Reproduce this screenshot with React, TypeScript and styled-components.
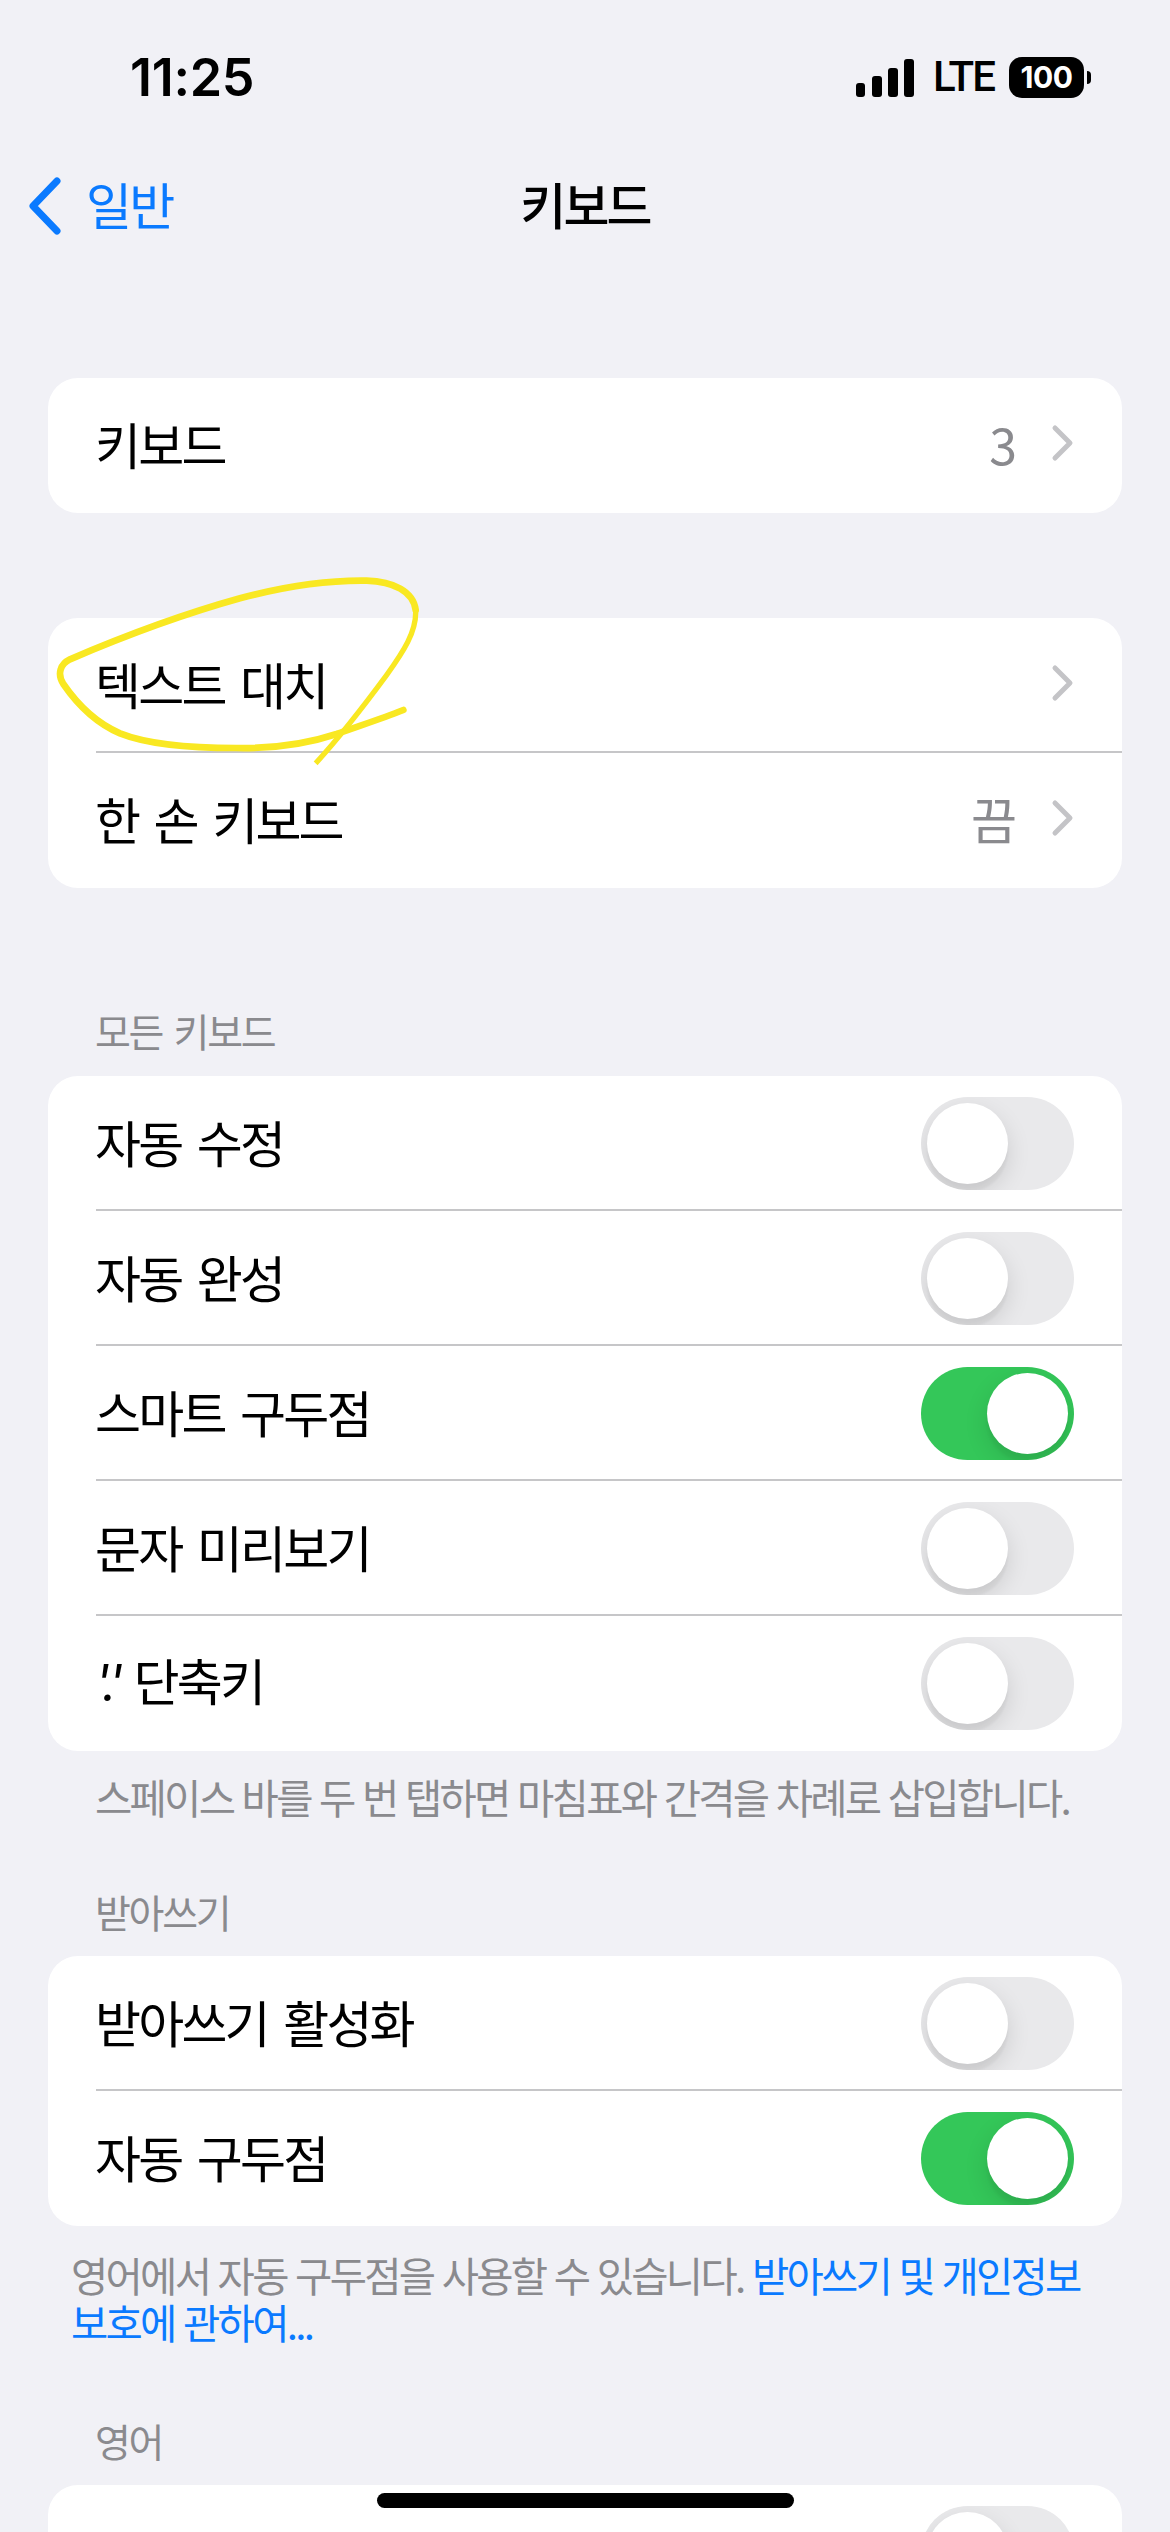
import React from "react";
import styled, { createGlobalStyle } from "styled-components";

const FONT = `"Noto Sans CJK KR", "Noto Sans", sans-serif`;

const Global = createGlobalStyle`
  html, body { margin: 0; padding: 0; background: #f2f2f7; }
  body { font-family: ${FONT}; }
  * { box-sizing: border-box; }
`;

const Page = styled.div`
  position: relative;
  width: 1170px;
  height: 2532px;
  overflow: hidden;
  background: #f1f1f6;
  color: #000;
  font-family: ${FONT};
`;

const StatusBar = styled.div`
  height: 160px;
  display: flex;
  justify-content: space-between;
  align-items: flex-start;
  padding: 47px 86px 0 130px;
`;

const Time = styled.div`
  font-family: Inter, "Liberation Sans", sans-serif;
  font-weight: 600;
  font-size: 52px;
  line-height: 62px;
  letter-spacing: -0.3px;
`;

const StatusIcons = styled.div`
  display: flex;
  align-items: center;
  height: 62px;
  margin-top: -1px;
`;

const Signal = styled.svg`
  width: 58px;
  height: 38px;
  display: block;
  margin-top: 1px;
`;

const Lte = styled.div`
  font-family: Roboto, "Liberation Sans", sans-serif;
  font-weight: 500;
  font-size: 42px;
  line-height: 62px;
  margin-left: 19px;
  width: 57px;
  letter-spacing: -2px;
  white-space: nowrap;
`;

const Battery = styled.div`
  position: relative;
  margin-left: 19px;
  width: 75px;
  height: 41px;
  border-radius: 13px;
  background: #000;
  color: #fff;
  display: flex;
  align-items: center;
  justify-content: center;
  font-family: Inter, "Liberation Sans", sans-serif;
  font-weight: 700;
  font-size: 30px;
  letter-spacing: -0.5px;

  &::after {
    content: "";
    position: absolute;
    right: -7px;
    top: 14px;
    width: 4px;
    height: 13px;
    background: #000;
    border-radius: 0 7px 7px 0;
  }
`;

const NavBar = styled.div`
  position: relative;
  height: 92px;
  display: flex;
  align-items: center;
  justify-content: center;
`;

const BackButton = styled.div`
  position: absolute;
  left: 28px;
  top: 0;
  bottom: 0;
  display: flex;
  align-items: center;
  gap: 24px;
  color: #0a7aff;
  font-size: 50px;
  letter-spacing: -2.8px;
`;

const BackLabel = styled.span`
  line-height: 60px;
  margin-bottom: 6px;
`;

const BackChevron = styled.svg`
  width: 34px;
  height: 58px;
  display: block;
`;

const Title = styled.div`
  font-size: 50px;
  font-weight: 500;
  letter-spacing: -2.8px;
  line-height: 60px;
  margin-bottom: 6px;
`;

const Card = styled.div<{ $top: number }>`
  margin: ${(p) => p.$top}px 48px 0;
  background: #fff;
  border-radius: 30px;
  overflow: hidden;
`;

const Row = styled.div<{ $divider?: boolean }>`
  position: relative;
  height: 135px;
  display: flex;
  align-items: center;
  justify-content: space-between;
  padding: 0 48px 0 47px;

  ${(p) =>
    p.$divider
      ? `&::after {
           content: "";
           position: absolute;
           left: 48px;
           right: 0;
           bottom: 0;
           height: 2px;
           background: #c6c6c8;
         }`
      : ""}
`;

const Label = styled.span`
  font-size: 50px;
  letter-spacing: -2.8px;
  word-spacing: 7px;
  line-height: 60px;
  margin-bottom: 5px;
  white-space: pre;
`;

const QuoteMarks = styled.span`
  font-family: Inter, "Liberation Sans", sans-serif;
  font-style: italic;
  letter-spacing: -4px;
  margin-right: -1px;
`;

const Trailing = styled.div`
  display: flex;
  align-items: center;
`;

const Value = styled.span`
  color: #8a8a8e;
  font-size: 50px;
  letter-spacing: -3px;
  line-height: 60px;
  margin-right: 36px;
  margin-bottom: 5px;
`;

const RowChevron = styled.svg`
  width: 24px;
  height: 38px;
  display: block;
  margin-bottom: 5px;
`;

const Track = styled.div<{ $on?: boolean }>`
  position: relative;
  width: 153px;
  height: 93px;
  border-radius: 47px;
  overflow: hidden;
  background: ${(p) => (p.$on ? "#34c759" : "#e9e9eb")};
  flex: none;
`;

const Knob = styled.div<{ $on?: boolean }>`
  position: absolute;
  top: 6px;
  left: ${(p) => (p.$on ? "66px" : "6px")};
  width: 81px;
  height: 81px;
  border-radius: 50%;
  background: #fff;
  box-shadow: 0 9px 24px rgba(0, 0, 0, 0.12), 0 8px 3px rgba(0, 0, 0, 0.04);
`;

const SectionHeader = styled.div<{ $top: number }>`
  margin: ${(p) => p.$top}px 96px 0 95px;
  height: 50px;
  line-height: 50px;
  font-size: 39px;
  letter-spacing: -2.3px;
  word-spacing: 5px;
  color: #8a8a8e;
`;

const Footnote = styled.div<{ $top: number; $left: number }>`
  margin: ${(p) => p.$top}px 40px 0 ${(p) => p.$left}px;
  font-size: 40.5px;
  line-height: 47px;
  letter-spacing: -2.7px;
  word-spacing: 2px;
  word-break: keep-all;
  color: #8a8a8e;
`;

const FootLink = styled.span`
  color: #0a7aff;
`;

const Scribble = styled.svg`
  position: absolute;
  left: 40px;
  top: 560px;
  width: 400px;
  height: 220px;
  pointer-events: none;
`;

const HomeIndicator = styled.div`
  position: absolute;
  left: 377px;
  top: 2493px;
  width: 417px;
  height: 15px;
  border-radius: 8px;
  background: #000;
`;

const Chevron = () => (
  <RowChevron viewBox="0 0 24 38" fill="none">
    <path d="M5 4 L20 19 L5 34" stroke="#c4c4c7" strokeWidth="5" strokeLinecap="round" strokeLinejoin="round" />
  </RowChevron>
);

const Toggle = ({ on }: { on?: boolean }) => (
  <Track $on={on}>
    <Knob $on={on} />
  </Track>
);

export default function App() {
  return (
    <>
      <Global />
      <Page>
        <StatusBar>
          <Time>11:25</Time>
          <StatusIcons>
            <Signal viewBox="0 0 58 38">
              <rect x="0" y="24" width="9" height="14" rx="3" fill="#000" />
              <rect x="16" y="17" width="10" height="21" rx="3" fill="#000" />
              <rect x="32" y="9" width="10" height="29" rx="3" fill="#000" />
              <rect x="48" y="0" width="10" height="38" rx="3" fill="#000" />
            </Signal>
            <Lte>LTE</Lte>
            <Battery>100</Battery>
          </StatusIcons>
        </StatusBar>

        <NavBar>
          <BackButton>
            <BackChevron viewBox="0 0 34 58" fill="none">
              <path d="M29 4 L5 29 L29 54" stroke="#0a7aff" strokeWidth="7" strokeLinecap="round" strokeLinejoin="round" />
            </BackChevron>
            <BackLabel>일반</BackLabel>
          </BackButton>
          <Title>키보드</Title>
        </NavBar>

        <Card $top={126}>
          <Row>
            <Label>키보드</Label>
            <Trailing>
              <Value>3</Value>
              <Chevron />
            </Trailing>
          </Row>
        </Card>

        <Card $top={105}>
          <Row $divider>
            <Label>텍스트 대치</Label>
            <Trailing>
              <Chevron />
            </Trailing>
          </Row>
          <Row>
            <Label>한 손 키보드</Label>
            <Trailing>
              <Value>끔</Value>
              <Chevron />
            </Trailing>
          </Row>
        </Card>

        <SectionHeader $top={117}>모든 키보드</SectionHeader>
        <Card $top={21}>
          <Row $divider>
            <Label>자동 수정</Label>
            <Toggle />
          </Row>
          <Row $divider>
            <Label>자동 완성</Label>
            <Toggle />
          </Row>
          <Row $divider>
            <Label>스마트 구두점</Label>
            <Toggle on />
          </Row>
          <Row $divider>
            <Label>문자 미리보기</Label>
            <Toggle />
          </Row>
          <Row>
            <Label>
              <QuoteMarks>'.'</QuoteMarks> 단축키
            </Label>
            <Toggle />
          </Row>
        </Card>
        <Footnote $top={22} $left={95}>
          스페이스 바를 두 번 탭하면 마침표와 간격을 차례로 삽입합니다.
        </Footnote>

        <SectionHeader $top={66}>받아쓰기</SectionHeader>
        <Card $top={20}>
          <Row $divider>
            <Label>받아쓰기 활성화</Label>
            <Toggle />
          </Row>
          <Row>
            <Label>자동 구두점</Label>
            <Toggle on />
          </Row>
        </Card>
        <Footnote $top={25} $left={71}>
          영어에서 자동 구두점을 사용할 수 있습니다. <FootLink>받아쓰기 및 개인정보 보호에 관하여...</FootLink>
        </Footnote>

        <SectionHeader $top={70}>영어</SectionHeader>
        <Card $top={20}>
          <Row>
            <span />
            <Toggle />
          </Row>
        </Card>

        <Scribble viewBox="0 0 1200 660" fill="none">
          <path
            d="M1090 450 C1020 478 950 500 890 522 C800 552 700 566 590 564 C470 564 330 556 240 520 C170 490 110 430 70 372 C50 340 62 312 90 298 C230 238 420 165 600 115 C730 80 860 60 980 62 C1060 64 1120 95 1127 150"
            stroke="#f9e822"
            strokeWidth="20"
            strokeLinecap="round"
          />
          <path
            d="M1127 150 C1130 215 1090 275 1040 345 C970 440 900 530 827 610"
            stroke="#f9e822"
            strokeWidth="16"
            strokeLinecap="butt"
          />
        </Scribble>

        <HomeIndicator />
      </Page>
    </>
  );
}
